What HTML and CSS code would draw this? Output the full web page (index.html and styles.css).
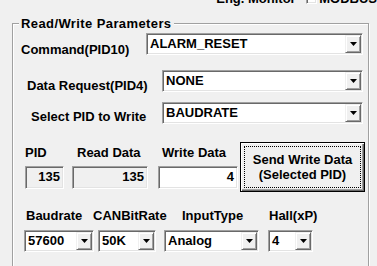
FILE: index.html
```html
<!DOCTYPE html>
<html>
<head>
<meta charset="utf-8">
<link rel="stylesheet" href="styles.css">
</head>
<body>
<div class="topstrip">
  <span class="top-label">Eng. Monitor</span>
  <span class="checkbox"></span>
  <span class="top-label2">MODBUS</span>
</div>
<div class="group">
  <div class="legend">Read/Write Parameters</div>

  <div class="row row1">
    <span class="lbl lbl1">Command(PID10)</span>
    <div class="combo w217"><span class="val">ALARM_RESET</span><span class="btn"><svg width="7" height="4" viewBox="0 0 7 4"><polygon points="0,0 7,0 3.5,4" fill="#000"/></svg></span></div>
  </div>

  <div class="row row2">
    <span class="lbl lbl2">Data Request(PID4)</span>
    <div class="combo w201"><span class="val">NONE</span><span class="btn"><svg width="7" height="4" viewBox="0 0 7 4"><polygon points="0,0 7,0 3.5,4" fill="#000"/></svg></span></div>
  </div>

  <div class="row row3">
    <span class="lbl lbl3">Select PID to Write</span>
    <div class="combo w201"><span class="val">BAUDRATE</span><span class="btn"><svg width="7" height="4" viewBox="0 0 7 4"><polygon points="0,0 7,0 3.5,4" fill="#000"/></svg></span></div>
  </div>

  <div class="row row4">
    <div class="col col-pid">
      <span class="collbl">PID</span>
      <div class="edit ro">135</div>
    </div>
    <div class="col col-read">
      <span class="collbl">Read Data</span>
      <div class="edit ro">135</div>
    </div>
    <div class="col col-write">
      <span class="collbl">Write Data</span>
      <div class="edit">4</div>
    </div>
    <button class="sendbtn"><span class="focus">Send Write Data<br>(Selected PID)</span></button>
  </div>

  <div class="labels5">
    <span>Baudrate</span>
    <span>CANBitRate</span>
    <span>InputType</span>
    <span>Hall(xP)</span>
  </div>
  <div class="row row5">
    <div class="combo w70"><span class="val">57600</span><span class="btn"><svg width="7" height="4" viewBox="0 0 7 4"><polygon points="0,0 7,0 3.5,4" fill="#000"/></svg></span></div>
    <div class="combo w58 ml4"><span class="val">50K</span><span class="btn"><svg width="7" height="4" viewBox="0 0 7 4"><polygon points="0,0 7,0 3.5,4" fill="#000"/></svg></span></div>
    <div class="combo w95 ml8"><span class="val">Analog</span><span class="btn"><svg width="7" height="4" viewBox="0 0 7 4"><polygon points="0,0 7,0 3.5,4" fill="#000"/></svg></span></div>
    <div class="combo w45 ml9"><span class="val">4</span><span class="btn"><svg width="7" height="4" viewBox="0 0 7 4"><polygon points="0,0 7,0 3.5,4" fill="#000"/></svg></span></div>
  </div>

  <div class="subgroup"></div>
</div>
</body>
</html>
```
FILE: styles.css
```css
* { box-sizing: border-box; margin: 0; padding: 0; }
html, body { width: 377px; height: 266px; overflow: hidden; background: #f0f0f0; }
body {
  font: bold 13px/15px "Liberation Sans", Arial, sans-serif;
  color: #000;
  display: flex;
  flex-direction: column;
}

.topstrip { display: flex; height: 15px; margin-top: -9px; flex-shrink: 0; }
.top-label { width: 340px; text-align: right; white-space: nowrap; }
.checkbox {
  width: 13px; height: 13px; margin-left: 10px; background: #fff;
  border: 1px solid; border-color: #a0a0a0 #fff #fff #a0a0a0;
  box-shadow: inset 1px 1px #696969, inset -1px -1px #e3e3e3;
}
.top-label2 { margin-left: 2px; white-space: nowrap; }

.group {
  position: relative;
  margin: 17px 0 0 12px;
  width: 357px; height: 270px; flex-shrink: 0;
  border: 1px solid #a0a0a0;
  box-shadow: inset 1px 1px 0 #fff, 1px 1px 0 #fff;
  padding-top: 9px;
}
.legend {
  position: absolute; top: -8px; left: 6px;
  padding: 0 2px; background: #f0f0f0;
  letter-spacing: 0.4px; white-space: nowrap;
}

.row { display: flex; align-items: flex-start; }
.lbl { white-space: nowrap; }
.lbl1 { margin: 9px 0 0 8px; width: 125px; }
.row2 { margin-top: 13px; }
.lbl2 { margin: 8px 0 0 14px; width: 135px; }
.row3 { margin-top: 9px; }
.lbl3 { margin: 7px 0 0 18px; width: 131px; }

.combo {
  display: flex; height: 22px; background: #fff; padding: 1px;
  border: 1px solid; border-color: #a0a0a0 #fff #fff #a0a0a0;
  box-shadow: inset 1px 1px #696969, inset -1px -1px #e3e3e3;
}
.combo .val { flex: 1; padding: 1px 0 0 2px; white-space: nowrap; overflow: hidden; }
.combo .btn {
  width: 16px; height: 18px; flex-shrink: 0; background: #f0f0f0;
  border: 1px solid; border-color: #f0f0f0 #696969 #696969 #f0f0f0;
  box-shadow: inset 1px 1px #fff, inset -1px -1px #a0a0a0;
  display: flex; align-items: center; justify-content: center;
}
.combo .btn svg { display: block; }
.w217 { width: 217px; }
.w201 { width: 201px; }
.w70 { width: 70px; }
.w58 { width: 58px; }
.w95 { width: 95px; }
.w45 { width: 45px; }
.ml4 { margin-left: 4px; }
.ml8 { margin-left: 8px; }
.ml9 { margin-left: 9px; }

.row4 { margin-top: 18px; padding-left: 12px; }
.col { display: flex; flex-direction: column; }
.collbl { margin-top: 3px; white-space: nowrap; }
.col-pid { width: 39px; }
.col-read { width: 76px; margin-left: 8px; }
.col-read .collbl { padding-left: 5px; }
.col-write { width: 80px; margin-left: 10px; }
.col-write .collbl { padding-left: 4px; }
.edit {
  margin-top: 6px; height: 23px; background: #fff; text-align: right;
  padding: 1px 2px 0 0;
  border: 1px solid; border-color: #a0a0a0 #fff #fff #a0a0a0;
  box-shadow: inset 1px 1px #696969, inset -1px -1px #e3e3e3;
  padding-top: 2px; padding-right: 3px;
}
.edit.ro { background: #f0f0f0; }

.sendbtn {
  margin-left: 2px; width: 125px; height: 50px;
  font: inherit; color: #000; background: #f0f0f0;
  border: 1px solid #000;
  box-shadow: inset 1px 1px #fff, inset -1px -1px #696969, inset -2px -2px #a0a0a0;
  padding: 3px; display: flex;
}
.sendbtn .focus {
  flex: 1; border: 1px dotted #000;
  display: flex; align-items: center; justify-content: center; text-align: center;
}

.labels5 {
  margin-top: 16px; padding-left: 13px;
  display: grid; grid-template-columns: 67px 89px 87px auto;
  white-space: nowrap;
}
.row5 { margin-top: 7px; padding-left: 11px; }

.subgroup {
  margin: 15px 0 0 103px; width: 245px; height: 20px;
  border-top: 1px solid #a0a0a0; border-left: 1px solid #a0a0a0;
  box-shadow: inset 1px 1px 0 #fff;
}
```
